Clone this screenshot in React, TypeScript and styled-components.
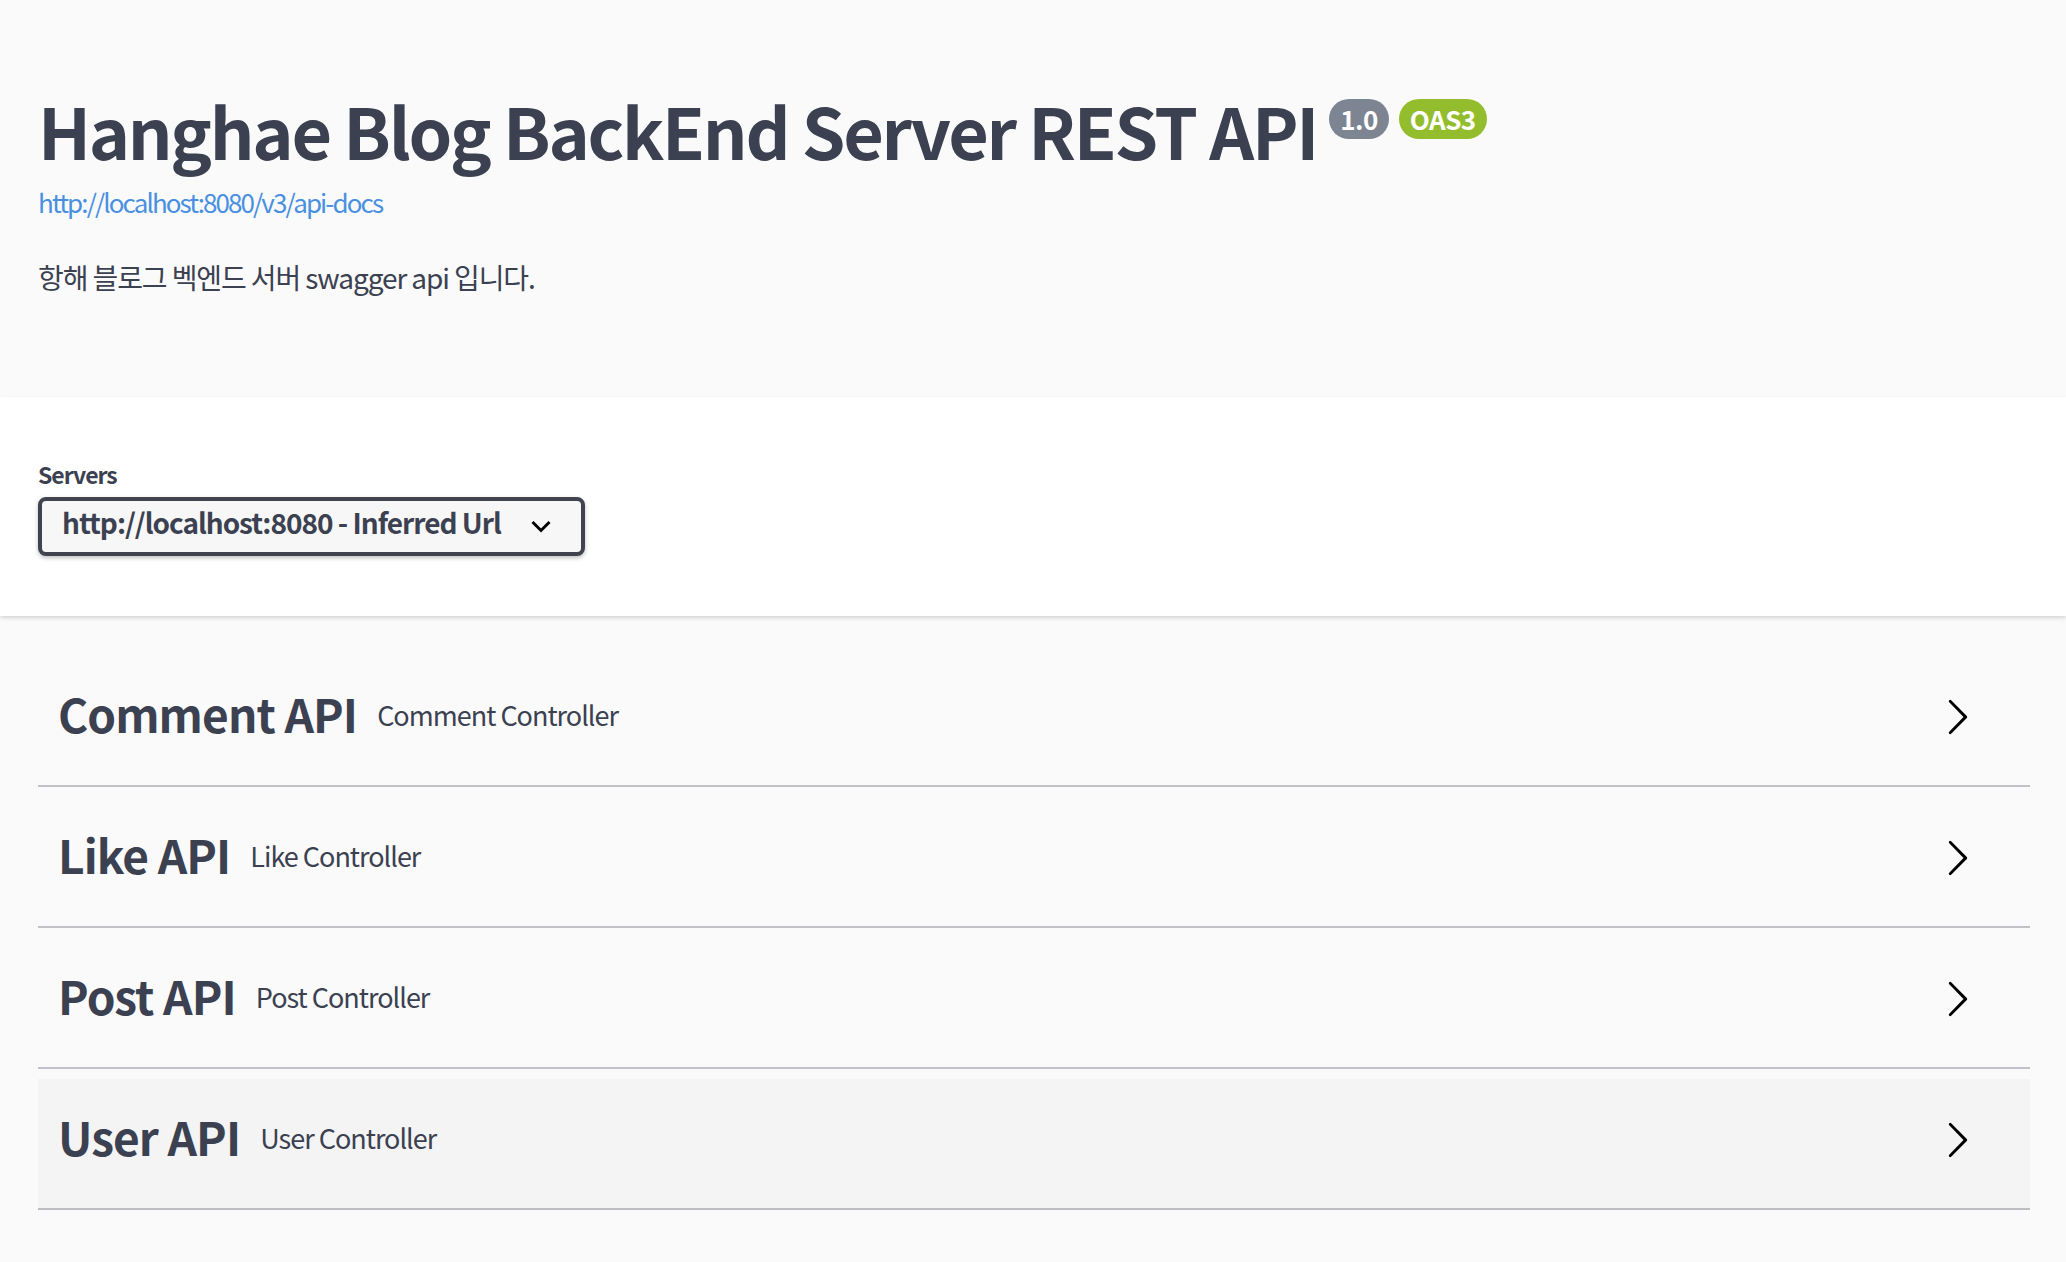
import styled, { createGlobalStyle } from "styled-components";

const GlobalStyle = createGlobalStyle`
  html, body {
    margin: 0;
    padding: 0;
    background: #fafafa;
  }
  body {
    font-family: "Noto Sans CJK KR", "Noto Sans", sans-serif;
    color: #3b4151;
  }
`;

const tags = [
  { name: "Comment API", description: "Comment Controller", hovered: false },
  { name: "Like API", description: "Like Controller", hovered: false },
  { name: "Post API", description: "Post Controller", hovered: false },
  { name: "User API", description: "User Controller", hovered: true },
];

const Arrow = () => (
  <svg width="40" height="40" viewBox="0 0 20 20" aria-hidden="true">
    <path
      fill="#000"
      d="M13.25 10L6.109 2.58a.697.697 0 0 1 0-.979.68.68 0 0 1 .969 0l7.83 7.908a.697.697 0 0 1 0 .979l-7.83 7.908a.68.68 0 0 1-.969 0 .697.697 0 0 1 0-.979L13.25 10z"
    />
  </svg>
);

const App = () => {
  return (
    <Page>
      <GlobalStyle />
      <InfoSection>
        <Title>
          Hanghae Blog BackEnd Server REST API
          <Badge>1.0</Badge>
          <Badge $stamp>OAS3</Badge>
        </Title>
        <Link href="#">http://localhost:8080/v3/api-docs</Link>
        <Description>항해 블로그 벡엔드 서버 swagger api 입니다.</Description>
      </InfoSection>

      <SchemeContainer>
        <ServersLabel>Servers</ServersLabel>
        <SelectBox>
          <span>http://localhost:8080 - Inferred Url</span>
          <svg width="20" height="14" viewBox="0 0 20 14" aria-hidden="true">
            <polyline
              points="1.5,2 10,10.5 18.5,2"
              fill="none"
              stroke="#000"
              strokeWidth="3"
            />
          </svg>
        </SelectBox>
      </SchemeContainer>

      <TagList>
        {tags.map((tag) => (
          <TagRow key={tag.name} $hovered={tag.hovered}>
            <TagName>{tag.name}</TagName>
            <TagDescription>{tag.description}</TagDescription>
            <ExpandButton>
              <Arrow />
            </ExpandButton>
          </TagRow>
        ))}
      </TagList>
    </Page>
  );
};
export default App;

const Page = styled.div`
  min-height: 1262px;
  background: #fafafa;
`;

const InfoSection = styled.section`
  padding: 87px 36px 100px 38px;
  background: #fafafa;
  display: flex;
  flex-direction: column;
  align-items: flex-start;
`;

const Title = styled.h2`
  margin: 0;
  font-size: 70px;
  line-height: 86px;
  font-weight: 700;
  letter-spacing: -2.3px;
  color: #3b4151;
  display: flex;
  align-items: flex-start;
`;

const Badge = styled.span<{ $stamp?: boolean }>`
  margin: 12px 0 0 ${(p) => (p.$stamp ? "10px" : "12px")};
  padding: 0 11px;
  height: 40px;
  line-height: 40px;
  border-radius: 40px;
  background: ${(p) => (p.$stamp ? "#94bd2e" : "#7d8492")};
  color: #fff;
  font-size: 26px;
  font-weight: 700;
  letter-spacing: -0.5px;
`;

const Link = styled.a`
  margin-top: 9px;
  font-size: 26px;
  line-height: 40px;
  letter-spacing: -1.9px;
  color: #4990e2;
  text-decoration: none;
`;

const Description = styled.p`
  margin: 35px 0 0;
  font-size: 28px;
  line-height: 40px;
  letter-spacing: -1.1px;
  color: #3b4151;
`;

const SchemeContainer = styled.section`
  background: #fff;
  box-shadow: 0 2px 4px 0 rgba(0, 0, 0, 0.15);
  padding: 61px 38px 60px;
  display: flex;
  flex-direction: column;
  align-items: flex-start;
`;

const ServersLabel = styled.div`
  font-size: 23px;
  line-height: 32px;
  font-weight: 700;
  letter-spacing: -1px;
  color: #3b4151;
  margin-bottom: 7px;
`;

const SelectBox = styled.div`
  display: flex;
  align-items: center;
  gap: 30px;
  height: 59px;
  box-sizing: border-box;
  padding: 0 30px 10px 20px;
  border: 4px solid #41444e;
  border-radius: 8px;
  background: #f7f7f7;
  box-shadow: 0 2px 4px 0 rgba(0, 0, 0, 0.25);
  font-size: 28px;
  line-height: 40px;
  font-weight: 700;
  letter-spacing: -1px;
  color: #3b4151;

  svg {
    margin-top: 10px;
  }
`;

const TagList = styled.div`
  margin-top: 40px;
  padding: 0 36px 0 38px;
  display: flex;
  flex-direction: column;
  gap: 10px;
`;

const TagRow = styled.div<{ $hovered: boolean }>`
  display: flex;
  align-items: center;
  height: 131px;
  box-sizing: border-box;
  padding: 0 40px 16px 20px;
  border-bottom: 2px solid rgba(59, 65, 81, 0.3);
  background: ${(p) => (p.$hovered ? "#f4f4f4" : "transparent")};
`;

const TagName = styled.span`
  font-size: 46px;
  line-height: 64px;
  font-weight: 700;
  letter-spacing: -0.9px;
  color: #3b4151;
`;

const TagDescription = styled.span`
  flex: 1;
  padding: 4px 20px 0;
  font-size: 27px;
  line-height: 40px;
  letter-spacing: -1px;
  color: #3b4151;
`;

const ExpandButton = styled.div`
  display: flex;
  margin-right: 13px;
  padding-top: 8px;
`;
